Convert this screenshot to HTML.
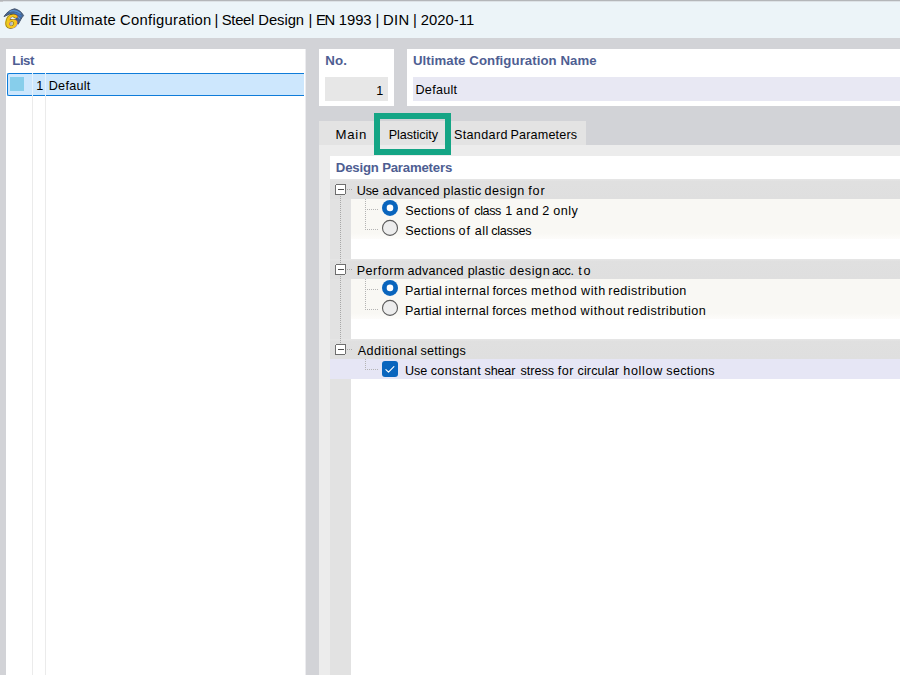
<!DOCTYPE html>
<html lang="en">
<head>
<meta charset="utf-8">
<title>Edit Ultimate Configuration</title>
<style>
html,body{margin:0;padding:0;}
body{width:900px;height:675px;position:relative;overflow:hidden;background:#d2d3d7;font-family:"Liberation Sans",sans-serif;}
.a{position:absolute;}
.t{position:absolute;white-space:pre;line-height:normal;color:#000;}
</style>
</head>
<body>
<!-- title bar -->
<div class="a" style="left:0;top:0;width:900px;height:38px;background:#ecf4f8;"></div>
<div class="a" style="left:0;top:0;width:900px;height:1px;background:#b4b6b9;"></div>
<div class="a" style="left:0;top:1px;width:900px;height:1px;background:#dde2e6;"></div>
<div class="a" style="left:0;top:1px;width:3px;height:1px;background:#c6c8ca;"></div>
<!-- app icon -->
<svg class="a" style="left:0px;top:0px" width="30" height="36" viewBox="0 0 30 36">
  <path d="M4 16.6 C6.5 12.6 10 9.6 14.6 8.8 C18.6 9.6 21.6 12 23.6 15.6 C21.6 17.6 20.4 20.4 18.2 24.2 L15.4 22 L16.6 15 L9.4 14.2 Z" fill="#466792" stroke="#47566e" stroke-width="1" stroke-linejoin="round"/>
  <path d="M9.5 11.8 C12.5 10 16.5 10.4 20.6 13.4" fill="none" stroke="#5b93d6" stroke-width="1.3"/>
  <path d="M14.5 13 C17 13.2 19.4 14.6 21.4 16.4" fill="none" stroke="#3f78c6" stroke-width="1.3"/>
  <path d="M17.4 16.6 C18.4 17.2 19.2 18 19.8 19" fill="none" stroke="#5b93d6" stroke-width="1.2"/>
  <ellipse cx="10.6" cy="23.2" rx="2" ry="2.2" fill="#b9bcc2"/>
  <text transform="translate(4.2 28.2) scale(1.18 1) skewX(-8)" x="0" y="0" font-family="Liberation Sans, sans-serif" font-weight="bold" font-size="19.5" fill="#f6c61c" stroke="#5e4c12" stroke-width="0.9" paint-order="stroke">6</text>
</svg>

<!-- list panel -->
<div class="a" style="left:6px;top:49px;width:299px;height:626px;background:#fff;"></div>
<div class="a" style="left:305px;top:49px;width:1px;height:626px;background:#ececef;"></div>
<div class="a" style="left:32px;top:74px;width:1px;height:601px;background:#ebebeb;"></div>
<div class="a" style="left:45px;top:74px;width:1px;height:601px;background:#ebebeb;"></div>
<div class="a" style="left:7px;top:73px;width:297px;height:23px;box-sizing:border-box;background:#cde7fd;border:1px solid #0f7cd9;border-right:none;border-radius:2px 0 0 2px;"></div>
<div class="a" style="left:32px;top:73px;width:1px;height:23px;background:#e6f2fc;"></div>
<div class="a" style="left:45px;top:73px;width:1px;height:23px;background:#e6f2fc;"></div>
<div class="a" style="left:10px;top:77px;width:14px;height:13.5px;background:#87ceeb;"></div>

<!-- No. panel -->
<div class="a" style="left:319px;top:49px;width:75px;height:57px;background:#fff;"></div>
<div class="a" style="left:325px;top:77px;width:63px;height:24px;background:#e7e7e7;"></div>
<!-- Name panel -->
<div class="a" style="left:407px;top:49px;width:493px;height:57px;background:#fff;"></div>
<div class="a" style="left:413px;top:77px;width:487px;height:24px;background:#e8e8f3;"></div>

<!-- tab strip -->
<div class="a" style="left:319px;top:121px;width:267px;height:25px;background:#e3e3e3;"></div>
<div class="a" style="left:319px;top:145px;width:581px;height:530px;background:#ececec;"></div>
<!-- content panel -->
<div class="a" style="left:330px;top:156px;width:570px;height:519px;background:#fff;"></div>
<div class="a" style="left:330px;top:179px;width:21px;height:496px;background:#e2e2e2;"></div>
<!-- rows -->
<div class="a" style="left:330px;top:179px;width:570px;height:20px;background:linear-gradient(#e6e6e6,#e0e0e0 12%,#dfdfdf);"></div>
<div class="a" style="left:351px;top:199px;width:549px;height:40px;background:linear-gradient(#f9f8f4,#f9f8f4 85%,#fdfcfa);"></div>
<div class="a" style="left:330px;top:259px;width:570px;height:20px;background:linear-gradient(#e6e6e6,#e0e0e0 12%,#dfdfdf);"></div>
<div class="a" style="left:351px;top:279px;width:549px;height:40px;background:linear-gradient(#f9f8f4,#f9f8f4 85%,#fdfcfa);"></div>
<div class="a" style="left:330px;top:339px;width:570px;height:20px;background:linear-gradient(#e6e6e6,#e0e0e0 12%,#dfdfdf);"></div>
<div class="a" style="left:330px;top:359px;width:570px;height:20px;background:#e6e6f5;"></div>

<!-- tree decorations -->
<svg class="a" style="left:330px;top:179px" width="80" height="200" viewBox="0 0 80 200" shape-rendering="crispEdges">
  <g stroke="#a8a8a8" stroke-width="1" stroke-dasharray="1 1" fill="none">
    <line x1="10.5" y1="17" x2="10.5" y2="166"/>
    <line x1="17" y1="10.5" x2="23" y2="10.5"/>
    <line x1="17" y1="90.5" x2="23" y2="90.5"/>
    <line x1="17" y1="170.5" x2="23" y2="170.5"/>
  </g>
  <g stroke="#b4b4b4" stroke-width="1" stroke-dasharray="1 1" fill="none">
    <line x1="35.5" y1="20" x2="35.5" y2="51"/>
    <line x1="37" y1="30.5" x2="48" y2="30.5"/>
    <line x1="37" y1="50.5" x2="48" y2="50.5"/>
    <line x1="35.5" y1="100" x2="35.5" y2="131"/>
    <line x1="37" y1="110.5" x2="48" y2="110.5"/>
    <line x1="37" y1="130.5" x2="48" y2="130.5"/>
    <line x1="35.5" y1="180" x2="35.5" y2="191"/>
    <line x1="37" y1="190.5" x2="48" y2="190.5"/>
  </g>
  <g fill="#fff" stroke="#6e6e6e" stroke-width="1">
    <rect x="5.5" y="5.5" width="10" height="10" rx="1.5"/>
    <rect x="5.5" y="85.5" width="10" height="10" rx="1.5"/>
    <rect x="5.5" y="165.5" width="10" height="10" rx="1.5"/>
  </g>
  <g stroke="#505050" stroke-width="1">
    <line x1="7.5" y1="10.5" x2="13.5" y2="10.5"/>
    <line x1="7.5" y1="90.5" x2="13.5" y2="90.5"/>
    <line x1="7.5" y1="170.5" x2="13.5" y2="170.5"/>
  </g>
</svg>

<!-- radios -->
<svg class="a" style="left:381px;top:199px" width="18" height="18" viewBox="0 0 18 18"><circle cx="9" cy="8.9" r="8" fill="#0a65bd"/><circle cx="9" cy="8.9" r="3.3" fill="#fff"/></svg>
<svg class="a" style="left:381px;top:219px" width="18" height="18" viewBox="0 0 18 18"><circle cx="9" cy="8.9" r="7.5" fill="#ededed" stroke="#5c5c5c" stroke-width="1.1"/></svg>
<svg class="a" style="left:381px;top:279px" width="18" height="18" viewBox="0 0 18 18"><circle cx="9" cy="8.9" r="8" fill="#0a65bd"/><circle cx="9" cy="8.9" r="3.3" fill="#fff"/></svg>
<svg class="a" style="left:381px;top:299px" width="18" height="18" viewBox="0 0 18 18"><circle cx="9" cy="8.9" r="7.5" fill="#ededed" stroke="#5c5c5c" stroke-width="1.1"/></svg>
<!-- checkbox -->
<svg class="a" style="left:382px;top:361px" width="16" height="16" viewBox="0 0 16 16"><rect x="0" y="0" width="16" height="16" rx="3" fill="#0a65bd"/><path d="M3.9 8.6 L6.5 11.1 L11.9 5.6" fill="none" stroke="#fff" stroke-width="1.15" stroke-linecap="round" stroke-linejoin="round"/></svg>

<!-- green highlight -->
<div class="a" style="left:374px;top:113px;width:77px;height:42px;box-sizing:border-box;border:6px solid #14a585;"></div>

<span class="t" style="left:30.14px;top:12px;font-size:14.8px;letter-spacing:0.067px;">Edit</span>
<span class="t" style="left:59.45px;top:12px;font-size:14.8px;letter-spacing:0.297px;">Ultimate</span>
<span class="t" style="left:120.05px;top:12px;font-size:14.8px;letter-spacing:0.273px;">Configuration</span>
<span class="t" style="left:214.43px;top:12px;font-size:14.8px;">|</span>
<span class="t" style="left:221.74px;top:12px;font-size:14.8px;letter-spacing:-0.287px;">Steel</span>
<span class="t" style="left:258.31px;top:12px;font-size:14.8px;letter-spacing:-0.062px;">Design</span>
<span class="t" style="left:308.41px;top:12px;font-size:14.8px;">|</span>
<span class="t" style="left:315.99px;top:12px;font-size:14.8px;letter-spacing:-1.299px;">EN</span>
<span class="t" style="left:338.87px;top:12px;font-size:14.8px;letter-spacing:-0.080px;">1993</span>
<span class="t" style="left:375.41px;top:12px;font-size:14.8px;">|</span>
<span class="t" style="left:383.09px;top:12px;font-size:14.8px;letter-spacing:0.336px;">DIN</span>
<span class="t" style="left:412.95px;top:12px;font-size:14.8px;">|</span>
<span class="t" style="left:420.79px;top:12px;font-size:14.8px;letter-spacing:0.043px;">2020-11</span>
<span class="t" style="left:12.37px;top:53px;font-size:13.2px;letter-spacing:-0.487px;color:#4e5e92;font-weight:bold;">List</span>
<span class="t" style="left:36.30px;top:79px;font-size:12.6px;">1</span>
<span class="t" style="left:48.76px;top:79px;font-size:12.6px;letter-spacing:0.274px;">Default</span>
<span class="t" style="left:325.33px;top:53px;font-size:13.3px;letter-spacing:0.038px;color:#4e5e92;font-weight:bold;">No.</span>
<span class="t" style="left:376.16px;top:84px;font-size:12.6px;">1</span>
<span class="t" style="left:412.88px;top:53px;font-size:13.2px;letter-spacing:0.079px;color:#4e5e92;font-weight:bold;">Ultimate Configuration Name</span>
<span class="t" style="left:415.50px;top:83px;font-size:12.6px;letter-spacing:0.278px;">Default</span>
<span class="t" style="left:335.61px;top:127px;font-size:13.2px;letter-spacing:0.682px;">Main</span>
<span class="t" style="left:388.76px;top:128px;font-size:12.6px;letter-spacing:-0.040px;">Plasticity</span>
<span class="t" style="left:453.89px;top:128px;font-size:12.6px;letter-spacing:0.355px;">Standard</span>
<span class="t" style="left:510.56px;top:128px;font-size:12.6px;letter-spacing:0.155px;">Parameters</span>
<span class="t" style="left:335.87px;top:160px;font-size:13.2px;letter-spacing:-0.195px;color:#4e5e92;font-weight:bold;">Design Parameters</span>
<span class="t" style="left:356.83px;top:184px;font-size:12.6px;letter-spacing:-0.212px;">Use</span>
<span class="t" style="left:382.60px;top:184px;font-size:12.6px;letter-spacing:0.325px;">advanced</span>
<span class="t" style="left:443.28px;top:184px;font-size:12.6px;letter-spacing:0.388px;">plastic</span>
<span class="t" style="left:484.52px;top:184px;font-size:12.6px;letter-spacing:0.547px;">design</span>
<span class="t" style="left:528.23px;top:184px;font-size:12.6px;letter-spacing:0.836px;">for</span>
<span class="t" style="left:405.20px;top:204px;font-size:12.6px;letter-spacing:0.170px;">Sections</span>
<span class="t" style="left:457.94px;top:204px;font-size:12.6px;letter-spacing:0.637px;">of</span>
<span class="t" style="left:474.27px;top:204px;font-size:12.6px;letter-spacing:-0.387px;">class</span>
<span class="t" style="left:505.14px;top:204px;font-size:12.6px;">1</span>
<span class="t" style="left:515.94px;top:204px;font-size:12.6px;letter-spacing:0.799px;">and</span>
<span class="t" style="left:542.14px;top:204px;font-size:12.6px;">2</span>
<span class="t" style="left:553.37px;top:204px;font-size:12.6px;letter-spacing:0.445px;">only</span>
<span class="t" style="left:405.20px;top:224px;font-size:12.6px;letter-spacing:0.219px;">Sections</span>
<span class="t" style="left:458.51px;top:224px;font-size:12.6px;letter-spacing:1.048px;">of</span>
<span class="t" style="left:474.65px;top:224px;font-size:12.6px;letter-spacing:0.492px;">all</span>
<span class="t" style="left:491.27px;top:224px;font-size:12.6px;letter-spacing:-0.272px;">classes</span>
<span class="t" style="left:356.76px;top:264px;font-size:12.6px;letter-spacing:0.458px;">Perform</span>
<span class="t" style="left:407.58px;top:264px;font-size:12.6px;letter-spacing:0.204px;">advanced</span>
<span class="t" style="left:467.65px;top:264px;font-size:12.6px;letter-spacing:0.226px;">plastic</span>
<span class="t" style="left:509.59px;top:264px;font-size:12.6px;letter-spacing:0.591px;">design</span>
<span class="t" style="left:551.91px;top:264px;font-size:12.6px;letter-spacing:-0.323px;">acc.</span>
<span class="t" style="left:578.28px;top:264px;font-size:12.6px;letter-spacing:1.727px;">to</span>
<span class="t" style="left:404.95px;top:284px;font-size:12.6px;letter-spacing:0.205px;">Partial</span>
<span class="t" style="left:444.79px;top:284px;font-size:12.6px;letter-spacing:0.461px;">internal</span>
<span class="t" style="left:492.38px;top:284px;font-size:12.6px;letter-spacing:0.053px;">forces</span>
<span class="t" style="left:531.02px;top:284px;font-size:12.6px;letter-spacing:0.771px;">method</span>
<span class="t" style="left:580.94px;top:284px;font-size:12.6px;letter-spacing:0.642px;">with</span>
<span class="t" style="left:608.25px;top:284px;font-size:12.6px;letter-spacing:0.463px;">redistribution</span>
<span class="t" style="left:404.95px;top:304px;font-size:12.6px;letter-spacing:0.170px;">Partial</span>
<span class="t" style="left:444.92px;top:304px;font-size:12.6px;letter-spacing:0.375px;">internal</span>
<span class="t" style="left:492.37px;top:304px;font-size:12.6px;letter-spacing:-0.034px;">forces</span>
<span class="t" style="left:530.91px;top:304px;font-size:12.6px;letter-spacing:0.706px;">method</span>
<span class="t" style="left:580.62px;top:304px;font-size:12.6px;letter-spacing:0.600px;">without</span>
<span class="t" style="left:627.58px;top:304px;font-size:12.6px;letter-spacing:0.470px;">redistribution</span>
<span class="t" style="left:357.64px;top:344px;font-size:12.6px;letter-spacing:0.456px;">Additional</span>
<span class="t" style="left:420.41px;top:344px;font-size:12.6px;letter-spacing:0.277px;">settings</span>
<span class="t" style="left:405.02px;top:364px;font-size:12.6px;letter-spacing:-0.083px;">Use</span>
<span class="t" style="left:430.72px;top:364px;font-size:12.6px;letter-spacing:0.336px;">constant</span>
<span class="t" style="left:484.62px;top:364px;font-size:12.6px;letter-spacing:-0.190px;">shear</span>
<span class="t" style="left:520.48px;top:364px;font-size:12.6px;letter-spacing:-0.016px;">stress</span>
<span class="t" style="left:557.70px;top:364px;font-size:12.6px;letter-spacing:0.560px;">for</span>
<span class="t" style="left:577.44px;top:364px;font-size:12.6px;letter-spacing:0.143px;">circular</span>
<span class="t" style="left:623.25px;top:364px;font-size:12.6px;letter-spacing:0.659px;">hollow</span>
<span class="t" style="left:666.31px;top:364px;font-size:12.6px;letter-spacing:0.287px;">sections</span>
</body>
</html>
